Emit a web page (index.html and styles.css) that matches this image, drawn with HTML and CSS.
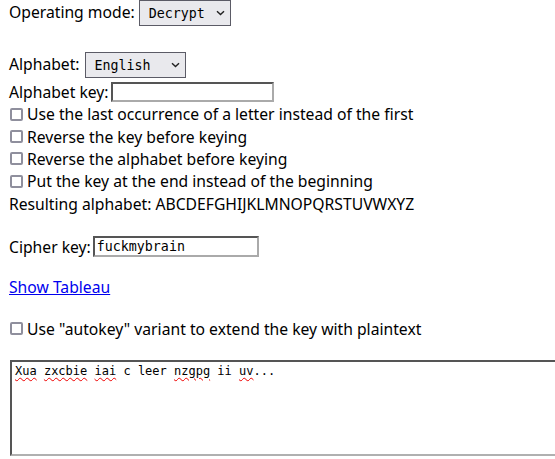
FILE: index.html
```html
<!DOCTYPE html>
<html lang="en">
<head>
<meta charset="utf-8">
<title>Cipher</title>
<link rel="stylesheet" href="styles.css">
</head>
<body>
<div class="row row-mode">
  <label for="mode" class="lift">Operating mode:</label>
  <span class="select-wrap select-mode">
    <select id="mode" class="select"><option>Decrypt</option><option>Encrypt</option></select>
    <svg class="chev" width="9" height="6" viewBox="0 0 9 6"><path d="M1 1.2 L4.5 4.6 L8 1.2" fill="none" stroke="#222" stroke-width="1.4"/></svg>
  </span>
</div>

<div class="row row-alpha">
  <label for="alpha" class="lift">Alphabet:</label>
  <span class="select-wrap select-alpha">
    <select id="alpha" class="select"><option>English</option></select>
    <svg class="chev" width="9" height="6" viewBox="0 0 9 6"><path d="M1 1.2 L4.5 4.6 L8 1.2" fill="none" stroke="#222" stroke-width="1.4"/></svg>
  </span>
</div>

<div class="row row-key">
  <label for="akey">Alphabet key:</label>
  <input id="akey" class="text-input akey" type="text" value="">
</div>

<label class="row check-row"><input type="checkbox" class="check"><span>Use the last occurrence of a letter instead of the first</span></label>
<label class="row check-row"><input type="checkbox" class="check"><span>Reverse the key before keying</span></label>
<label class="row check-row"><input type="checkbox" class="check"><span>Reverse the alphabet before keying</span></label>
<label class="row check-row"><input type="checkbox" class="check"><span>Put the key at the end instead of the beginning</span></label>
<div class="row result">Resulting alphabet: ABCDEFGHIJKLMNOPQRSTUVWXYZ</div>

<div class="row row-cipher">
  <label for="ckey">Cipher key:</label>
  <input id="ckey" class="text-input ckey" type="text" value="fuckmybrain">
</div>

<div class="row row-link"><a href="#" class="link">Show Tableau</a></div>

<label class="row check-row row-auto"><input type="checkbox" class="check"><span>Use "autokey" variant to extend the key with plaintext</span></label>

<div class="textarea" role="textbox" aria-multiline="true"><span class="miss">Xua</span> <span class="miss">zxcbie</span> <span class="miss">iai</span> c leer <span class="miss">nzgpg</span> ii <span class="miss">uv</span>...</div>
</body>
</html>
```

FILE: styles.css
```css
html {
  overflow: hidden;
}
body {
  margin: 0;
  padding: 0 0 0 9px;
  font-family: "Noto Sans", "DejaVu Sans", sans-serif;
  font-size: 15.7px;
  color: #000;
  background: #fff;
}
.row {
  display: flex;
  align-items: center;
  height: 22.4px;
  white-space: nowrap;
}
.lift {
  padding-bottom: 3px;
}
.row-mode {
  height: 26px;
  gap: 4px;
}
.row-alpha {
  height: 26px;
  margin-top: 26px;
  gap: 5px;
}
.row-key {
  height: 22px;
  margin-top: 3px;
  gap: 2px;
}
.select-wrap {
  position: relative;
  display: block;
  height: 26px;
}
.select {
  display: block;
  appearance: none;
  -webkit-appearance: none;
  height: 26px;
  margin: 0;
  padding: 0 0 0 9px;
  border: 1px solid #5b5b66;
  border-radius: 0;
  background: #e9e9ed;
  font-family: "DejaVu Sans Mono", monospace;
  font-size: 13.3px;
  color: #000;
  text-align: left;
}
.select-mode .select { width: 92px; }
.select-alpha .select { width: 101px; }
.chev {
  position: absolute;
  right: 6px;
  top: 10px;
  pointer-events: none;
}
.text-input {
  margin: 0;
  padding: 0 2px;
  border-style: solid;
  border-width: 2px;
  border-color: #555 #aaa #aaa #555;
  background: #fff;
  font-family: "DejaVu Sans Mono", monospace;
  font-size: 13.3px;
  color: #000;
  box-sizing: border-box;
}
.akey {
  width: 163px;
  height: 20px;
}
.check-row {
  gap: 4px;
}
.check {
  appearance: none;
  -webkit-appearance: none;
  width: 13px;
  height: 13px;
  margin: 0 0 0 1px;
  border: 2px solid #8f8f9d;
  border-radius: 2px;
  background: #fff;
  flex: none;
}
.row-cipher {
  height: 22px;
  margin-top: 21px;
  gap: 2px;
}
.ckey {
  width: 166px;
  height: 21px;
}
.row-link {
  margin-top: 18px;
}
.link {
  color: #0000ee;
  text-decoration: underline;
}
.row-auto {
  margin-top: 19px;
}
.textarea {
  margin-top: 20px;
  margin-left: 1px;
  width: 580px;
  height: 96px;
  box-sizing: border-box;
  border-style: solid;
  border-width: 2px;
  border-color: #555 #555 #b0b0b0 #555;
  padding: 2px 3px;
  font-family: "DejaVu Sans Mono", monospace;
  font-size: 12px;
  line-height: 14px;
  white-space: pre;
}
.miss {
  text-decoration: underline wavy #e00;
  text-decoration-thickness: 1px;
  text-underline-offset: 2px;
}
```
